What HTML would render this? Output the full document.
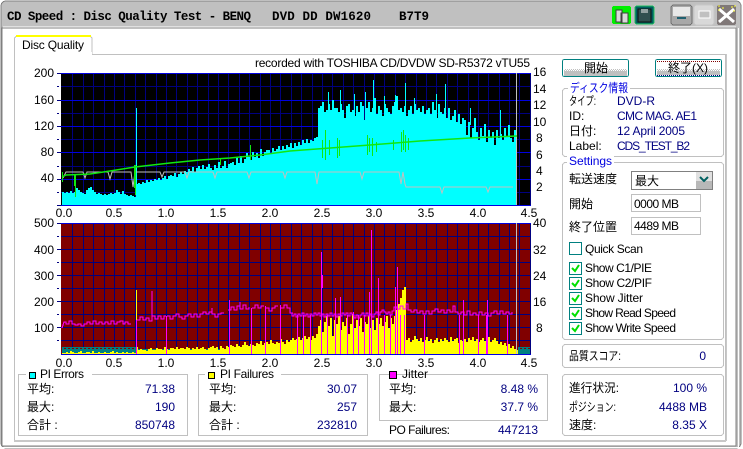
<!DOCTYPE html>
<html><head><meta charset="utf-8"><style>
html,body{margin:0;padding:0;background:#fff;overflow:hidden}
svg{display:block}
text{font-family:"Liberation Sans","Noto Sans CJK JP",sans-serif;font-size:12px;fill:#000}
.v{fill:#000080}.e{text-anchor:end}.m{text-anchor:middle}.b{fill:#0000e0}
.g{fill:none;stroke:#c0c0c0;stroke-width:1}
</style></head><body>
<svg width="743" height="449" viewBox="0 0 743 449" xmlns="http://www.w3.org/2000/svg" shape-rendering="crispEdges">
<defs>
<pattern id="dith" width="2" height="2" patternUnits="userSpaceOnUse"><rect width="2" height="2" fill="#fff"/><rect width="1" height="1" fill="#c0c0c0"/><rect x="1" y="1" width="1" height="1" fill="#c0c0c0"/></pattern>
<pattern id="tealdith" width="4" height="2" patternUnits="userSpaceOnUse"><rect width="4" height="2" fill="#008080"/><rect width="2" height="1" fill="#800000"/></pattern>
</defs>
<!-- frame -->
<rect width="743" height="449" fill="#fff"/>
<rect x="1" y="1" width="740" height="447" rx="5" fill="#c0c0c0" stroke="#808080"/>
<rect x="2" y="28" width="734" height="418" fill="#fff" stroke="#808080"/>
<path d="M3 27H736" stroke="#fff"/>
<rect x="738" y="28" width="1" height="420" fill="#fff"/>
<rect x="2" y="447" width="738" height="1" fill="#fff"/>
<!-- title -->
<text x="7" y="20" style="font-family:'Liberation Mono',monospace;font-weight:bold;font-size:12.5px" textLength="244">CD Speed : Disc Quality Test - BENQ</text>
<text x="272" y="20" style="font-family:'Liberation Mono',monospace;font-weight:bold;font-size:12.5px" textLength="99">DVD DD DW1620</text>
<text x="399" y="20" style="font-family:'Liberation Mono',monospace;font-weight:bold;font-size:12.5px" textLength="30">B7T9</text>
<!-- title icons -->
<rect x="612" y="6" width="19" height="18" rx="2" fill="#00f000"/>
<path d="M616 10h6v12h-6zM621 13h7v10h-7z" fill="#d8d8d8" stroke="#404040"/>
<rect x="635" y="6" width="19" height="18" rx="2" fill="#006060" stroke="#20c060"/>
<rect x="638" y="9" width="13" height="13" fill="#305050" stroke="#101010"/>
<rect x="641" y="9" width="7" height="4" fill="#90a0a0"/>
<rect x="671" y="5" width="21" height="20" rx="3" fill="#a8a8a8" stroke="#707070"/>
<rect x="673" y="7" width="17" height="9" fill="#e8e8e8"/>
<rect x="677" y="17" width="9" height="2" fill="#206070"/>
<rect x="694" y="5" width="20" height="20" rx="3" fill="#d8d8d8" stroke="#c8c8c8"/>
<rect x="699" y="11" width="11" height="7" fill="#c0c0c0" stroke="#fff"/>
<rect x="717" y="5" width="19" height="20" rx="2" fill="#807878"/>
<path d="M719 9l15 13M734 9l-15 13" stroke="#fff" stroke-width="3" shape-rendering="auto"/>
<path d="M718 6h2M722 8h2M731 7h2M734 6h2M718 10h2M733 11h2" stroke="#ffff40"/>
<!-- tab panel -->
<rect x="14.5" y="54.5" width="711" height="386" fill="#fff" class="g"/>
<path d="M14 440.500H726M14 441.500H726M726.500 54V441" stroke="#c8c8c8" fill="none"/>
<path d="M14.500 54V38l2-2H90l2 2V54" fill="#fff" stroke="#c0c0c0"/>
<rect x="16" y="35" width="75" height="2" fill="#ffff00"/>
<rect x="15" y="52" width="77" height="4" fill="#fff"/>
<text x="22" y="49" textLength="62">Disc Quality</text>
<text x="255" y="67" textLength="275">recorded with TOSHIBA CD/DVDW SD-R5372 vTU55</text>

<!-- TOP CHART -->
<rect x="61" y="73" width="470" height="132" fill="#000"/>
<path d="M72.500 73V205M83.500 73V205M93.500 73V205M104.500 73V205M114.500 73V205M124.500 73V205M135.500 73V205M145.500 73V205M156.500 73V205M166.500 73V205M176.500 73V205M187.500 73V205M197.500 73V205M208.500 73V205M218.500 73V205M228.500 73V205M239.500 73V205M249.500 73V205M260.500 73V205M270.500 73V205M280.500 73V205M291.500 73V205M301.500 73V205M312.500 73V205M322.500 73V205M332.500 73V205M343.500 73V205M353.500 73V205M364.500 73V205M374.500 73V205M384.500 73V205M395.500 73V205M405.500 73V205M416.500 73V205M426.500 73V205M436.500 73V205M447.500 73V205M457.500 73V205M468.500 73V205M478.500 73V205M488.500 73V205M499.500 73V205M509.500 73V205M519.500 73V205M530.500 73V205M61 86.500H531M61 113.500H531M61 139.500H531M61 166.500H531M61 192.500H531" stroke="#000080" fill="none"/>
<path d="M61 73.500H531M61 100.500H531M61 126.500H531M61 152.500H531M61 179.500H531M61 205.500H531" stroke="#0000e0" fill="none"/>
<path d="M57 73.500h4M57 86.500h2M57 100.500h4M57 113.500h2M57 126.500h4M57 139.500h2M57 152.500h4M57 166.500h2M57 179.500h4M57 192.500h2M57 205.500h4" stroke="#000080" fill="none"/>
<path fill="#00ffff" d="M62 205V192h2V193h2V192h2V193h2V191h2V193h2V192h2V188h2V190h2V192h2V193h2V194h2V190h2V188h2V187h2V190h2V192h2V194h2V193h2V194h2V195h2V194h2V195h2V194h2V193h2V194h2V193h2V190h2V192h2V194h2V191h2V194h2V195h2V196h2V195h2V196h2V197h2V205Z
M136 205V184h2V183h2V184h2V182h2V183h2V180h2V182h2V180h2V181h2V179h2V180h2V178h2V180h2V178h2V176h2V179h2V176h2V175h2V176h2V173h2V177h2V174h2V172h2V174h2V171h2V205Z
M186 205V172h2V169h2V171h2V167h2V172h2V168h2V166h2V169h2V165h2V169h2V167h2V164h2V168h2V170h2V165h2V168h2V162h2V168h2V166h2V161h2V168h2V164h2V205Z
M230 205V163h2V162h2V165h2V158h2V163h2V156h2V163h2V159h2V153h2V157h2V205Z
M250 205V160h2V152h2V157h2V153h2V158h2V149h2V156h2V152h2V150h2V150h2V154h2V148h2V151h2V205Z
M276 205V149h2V146h2V150h2V146h2V149h2V145h2V147h2V143h2V148h2V143h2V146h2V142h2V145h2V140h2V143h2V139h2V143h2V140h2V141h2V138h2V205Z
M316 205V137h2V108h2V106h2V102h2V112h2V110h2V104h2V110h2V100h2V108h2V108h2V112h2V104h2V110h2V118h2V106h2V104h2V112h2V110h2V116h2V106h2V112h2V102h2V106h2V120h2V108h2V102h2V112h2V108h2V98h2V114h2V106h2V110h2V116h2V104h2V108h2V112h2V114h2V106h2V102h2V96h2V110h2V108h2V112h2V106h2V116h2V110h2V106h2V114h2V104h2V110h2V108h2V112h2V106h2V114h2V110h2V205Z
M428 205V108h2V114h2V102h2V110h2V118h2V104h2V112h2V114h2V108h2V118h2V108h2V120h2V116h2V110h2V122h2V114h2V124h2V118h2V205Z
M464 205V120h2V135h2V122h2V138h2V128h2V118h2V132h2V140h2V128h2V136h2V124h2V142h2V130h2V138h2V205Z
M492 205V132h2V145h2V130h2V138h2V134h2V140h2V128h2V136h2V125h2V138h2V142h2V130h2V205Z"/>
<path d="M136.500 205V108M328.500 120V92M340.500 120V90M354.500 120V94M373.500 120V80M365.500 120V92M384.500 120V96M395.500 120V95M405.500 120V83M414.500 120V98M445.500 120V84M436.500 120V94M470.500 125V108M500.500 135V110" stroke="#00ffff" fill="none"/>
<rect x="516" y="73" width="1" height="132" fill="#c0c0c0"/>
<!-- grey write speed -->
<path fill="none" stroke="#c0c0c0" shape-rendering="auto" d="M63 178L66 172H83L85 178 87 172H108L110 179 112 172H131L133 187 135 172H160L162 177 164 172H185L187 178 189 172H213L215 178 217 172H247L249 178 251 172H283L285 178 287 172H315L317 184 319 172H360L362 179 364 172H399L401 184 403 172 405 184 406 187H440L442 193 444 187H486L488 192 490 187H513"/>
<!-- green read speed -->
<path fill="none" stroke="#10e810" stroke-width="1.500" shape-rendering="auto" d="M62 177L66 175 90 174 110 171 135 167 170 163 200 160 230 158 260 155 290 151 330 148 370 145 420 141 470 138 517 136"/>
<path fill="none" stroke="#10e810" d="M62.500 172V182M75.500 174V197M74.500 174V186M135.500 165V195M134.500 165V188M220.500 158V165M250.500 145V160M325.500 130V160M322.500 140V158M329.500 140V155M337.500 138V158M339.500 140V156M367.500 135V155M369.500 138V152M372.500 138V156M376.500 142V152M393.500 140V150M401.500 132V152M403.500 130V150M405.500 135V152M408.500 138V150"/>
<!-- axis text top -->
<text x="54" y="77" class="e">200</text><text x="54" y="104" class="e">160</text><text x="54" y="130" class="e">120</text><text x="54" y="156" class="e">80</text><text x="54" y="182" class="e">40</text>
<text x="533" y="76">16</text><text x="533" y="93">14</text><text x="533" y="109">12</text><text x="533" y="126">10</text><text x="536" y="142">8</text><text x="536" y="159">6</text><text x="536" y="175">4</text><text x="536" y="191">2</text>
<text x="64" y="217" class="m">0.0</text><text x="114" y="217" class="m">0.5</text><text x="166" y="217" class="m">1.0</text><text x="218" y="217" class="m">1.5</text><text x="270" y="217" class="m">2.0</text><text x="322" y="217" class="m">2.5</text><text x="374" y="217" class="m">3.0</text><text x="426" y="217" class="m">3.5</text><text x="478" y="217" class="m">4.0</text><text x="529" y="217" class="m">4.5</text>

<!-- BOTTOM CHART -->
<rect x="61" y="223" width="470" height="131" fill="#800000"/>
<path d="M72.500 223V354M83.500 223V354M93.500 223V354M104.500 223V354M114.500 223V354M124.500 223V354M135.500 223V354M145.500 223V354M156.500 223V354M166.500 223V354M176.500 223V354M187.500 223V354M197.500 223V354M208.500 223V354M218.500 223V354M228.500 223V354M239.500 223V354M249.500 223V354M260.500 223V354M270.500 223V354M280.500 223V354M291.500 223V354M301.500 223V354M312.500 223V354M322.500 223V354M332.500 223V354M343.500 223V354M353.500 223V354M364.500 223V354M374.500 223V354M384.500 223V354M395.500 223V354M405.500 223V354M416.500 223V354M426.500 223V354M436.500 223V354M447.500 223V354M457.500 223V354M468.500 223V354M478.500 223V354M488.500 223V354M499.500 223V354M509.500 223V354M519.500 223V354M530.500 223V354M61 236.500H531M61 249.500H531M61 262.500H531M61 275.500H531M61 288.500H531M61 301.500H531M61 314.500H531M61 327.500H531M61 340.500H531" stroke="#000080" fill="none"/>
<path d="M61 223.500H531M61 354.500H531" stroke="#0000e0" fill="none"/>
<path d="M57 223.500h4M57 236.500h2M57 249.500h4M57 262.500h2M57 275.500h4M57 288.500h2M57 301.500h4M57 314.500h2M57 327.500h4M57 340.500h2" stroke="#000080" fill="none"/>
<rect x="62" y="347" width="74" height="7" fill="#008080"/>
<rect x="62" y="347" width="74" height="2" fill="url(#tealdith)"/>
<rect x="136" y="349" width="100" height="5" fill="#008080"/>
<rect x="518" y="347" width="12" height="7" fill="#008080"/>
<rect x="518" y="347" width="12" height="2" fill="url(#tealdith)"/>
<path fill="#ffff00" d="M62 354V353h2V353h2V352h2V353h2V351h2V352h2V353h2V353h2V352h2V351h2V353h2V353h2V352h2V352h2V353h2V351h2V353h2V353h2V352h2V353h2V353h2V352h2V353h2V353h2V352h2V351h2V353h2V352h2V353h2V353h2V352h2V353h2V352h2V353h2V353h2V352h2V353h2V354Z
M136 354V290h1V347h1V350h2V349h2V350h2V350h2V351h2V349h2V348h2V350h2V350h2V348h2V349h2V349h2V350h2V347h2V349h2V350h2V348h2V348h2V349h2V347h2V349h2V348h2V348h2V349h2V347h2V348h2V350h2V348h2V349h2V347h2V349h2V348h2V347h2V349h2V350h2V348h2V347h2V346h2V348h2V347h2V350h2V346h2V348h2V349h2V346h2V347h2V345h2V354Z
M230 354V348h2V346h2V347h2V344h2V346h2V347h2V345h2V342h2V345h2V346h2V344h2V345h2V346h2V343h2V344h2V341h2V345h2V343h2V342h2V344h2V340h2V343h2V344h2V342h2V343h2V339h2V342h2V344h2V340h2V342h2V354Z
M290 354V340h2V338h2V340h2V339h2V337h2V340h2V338h2V336h2V339h2V337h2V340h2V336h2V338h2V334h2V354Z
M318 354V326h2V320h2V332h2V322h2V316h2V326h2V318h2V336h2V320h2V324h2V316h2V330h2V322h2V326h2V318h2V334h2V324h2V314h2V328h2V320h2V326h2V318h2V332h2V322h2V324h2V316h2V328h2V320h2V330h2V318h2V324h2V318h2V326h2V322h2V316h2V328h2V318h2V324h2V316h2V310h2V304h2V298h2V290h2V287h2V354Z
M406 354V340h2V338h2V342h2V340h2V336h2V339h2V341h2V338h2V342h2V340h2V337h2V341h2V339h2V343h2V340h2V338h2V342h2V339h2V341h2V338h2V340h2V342h2V337h2V341h2V339h2V338h2V343h2V340h2V341h2V339h2V342h2V338h2V340h2V337h2V341h2V339h2V342h2V340h2V338h2V341h2V339h2V337h2V342h2V340h2V338h2V341h2V344h2V342h2V345h2V343h2V346h2V344h2V348h2V346h2V349h2V350h2V354Z"/>
<!-- magenta jitter -->
<path fill="none" stroke="#ff00ff" stroke-width="1" d="M62 328L64 322h2v2h3v-3h3v3h3v1h3v-1h3v2h3v-2h3v-2h3v2h3v-3h3v3h3v-2h3v2h3v-2h3v2h3v-3h3v3h3v-2h3v-1h3v3h2v-2h3v2h3M136.500 322V354M136.500 354V320"/>
<path fill="none" stroke="#ff00ff" d="M137 320h3v-3h3v3h3v-2h3v3h3V291v25h3v3h3v-3h3v3h3v-3h2M166.500 316V354M167 316h3v3h3v-3h3v-2h3v3h3v2h3v-3h3v-2h3v3h3v-3h3v3h3v-3h3v-2h3v2h3v-2h3v-4v6h3v3h3v-3h3v-1h3M229.500 300V354M228 310h3v-3h3v3h3v-4h3v-4v7h3v-4h3v4h3v-2M251.500 308V354M252 308h3v-3h3v3h3v-2h3M265.500 306V354M266 308h3v3h3v-3h3v-2h3M280.500 305V354M281 308h3v-3h3v3h3v5h3"/>
<path fill="none" stroke="#ff00ff" d="M290 313h2v3h2v-2h2v3h2v-3h2v2h2v-3h2v3h2v-2h2v3h2v-3h2v2h2v-3h2v2h2v-2h2v3h2v-2h2v3h2v-3h2v2h2v-3h2v3h2v-2h2v3h2v-3h2v2h2v-3h2v2h2v-2h2v3h2v-3h2v2h2v3h2v-3h2v3h2v-3h2v-2h2v3h2v-3h2v3h2v-2h2v3h2v-3h2v-2h2v3h2v-3h2v-2h2v2h2v2h2v-2h2v3h2v-4h2v-4h3v2h3v-3h3v3h3v-5h2v6h3v2h3v-2h3v3h3v-2h3v3h3v-3h3v3h3v-3h3v-2h3v3h3v-2h3v3h3v-3h3v2h3v-6h2v6h3v2h3v-2h3v3h3v-4h3v4h3v-2h3v2h3v-3h3v3h3v-2h3v3h3v-3h3v-2h3v3h3v-3h3v3h3v-2h3v2h3v-2"/>
<path fill="none" stroke="#ff00ff" d="M297.500 315V354M303.500 315V354M310.500 315V354M321.500 252V354M322.500 275V288M327.500 315V354M335.500 298V354M340.500 297V354M347.500 315V354M353.500 312V354M358.500 315V354M364.500 315V354M369.500 292V354M371.500 230V354M378.500 278V354M384.500 315V354M390.500 315V354M395.500 287V354M397.500 267V354M400.500 315V354M404.500 315V354M424.500 315V354M459.500 315V354M463.500 300V354M478.500 315V354M486.500 315V354M487.500 300V354M507.500 315V354"/>
<rect x="516" y="223" width="1" height="131" fill="#c0c0c0"/>
<!-- axis text bottom -->
<text x="54" y="227" class="e">500</text><text x="54" y="254" class="e">400</text><text x="54" y="280" class="e">300</text><text x="54" y="306" class="e">200</text><text x="54" y="332" class="e">100</text>
<text x="533" y="227">40</text><text x="533" y="254">32</text><text x="533" y="280">24</text><text x="533" y="306">16</text><text x="536" y="332">8</text>
<text x="64" y="367" class="m">0.0</text><text x="114" y="367" class="m">0.5</text><text x="166" y="367" class="m">1.0</text><text x="218" y="367" class="m">1.5</text><text x="270" y="367" class="m">2.0</text><text x="322" y="367" class="m">2.5</text><text x="374" y="367" class="m">3.0</text><text x="426" y="367" class="m">3.5</text><text x="478" y="367" class="m">4.0</text><text x="529" y="367" class="m">4.5</text>

<!-- bottom stats -->
<rect x="18.500" y="374.500" width="169" height="61" class="g"/>
<rect x="26" y="370" width="66" height="10" fill="#fff"/>
<rect x="29.500" y="372.500" width="6" height="6" fill="#00ffff" stroke="#000"/>
<text x="40" y="378" textLength="44">PI Errors</text>
<text x="27" y="393">平均:</text><text x="27" y="411">最大:</text><text x="27" y="429">合計 :</text>
<text x="175" y="393" class="v e">71.38</text><text x="175" y="411" class="v e">190</text><text x="175" y="429" class="v e">850748</text>

<rect x="198.500" y="374.500" width="169" height="61" class="g"/>
<rect x="205" y="370" width="76" height="10" fill="#fff"/>
<rect x="208.500" y="372.500" width="6" height="6" fill="#ffff00" stroke="#000"/>
<text x="220" y="378" textLength="54">PI Failures</text>
<text x="209" y="393">平均:</text><text x="209" y="411">最大:</text><text x="209" y="429">合計 :</text>
<text x="357" y="393" class="v e">30.07</text><text x="357" y="411" class="v e">257</text><text x="357" y="429" class="v e">232810</text>

<rect x="379.500" y="374.500" width="168" height="46" class="g"/>
<rect x="389.500" y="371.500" width="7" height="7" fill="#ff00ff" stroke="#000"/>
<text x="402" y="378" textLength="26">Jitter</text>
<text x="389" y="393">平均:</text><text x="389" y="411">最大:</text>
<text x="538" y="393" class="v e">8.48 %</text><text x="538" y="411" class="v e">37.7 %</text>
<text x="389" y="434" textLength="61">PO Failures:</text><text x="538" y="434" class="v e">447213</text>

<!-- buttons -->
<rect x="562.500" y="59.500" width="66" height="17" rx="2" fill="#fff" stroke="#008080"/>
<rect x="564" y="71" width="63" height="5" fill="#c0c0c0"/>
<rect x="564" y="69" width="63" height="2" fill="url(#dith)"/>
<text x="584" y="72" textLength="24">開始</text>
<rect x="655.500" y="59.500" width="66" height="17" rx="2" fill="#fff" stroke="#008080"/>
<rect x="657" y="71" width="63" height="4" fill="#c0c0c0"/>
<rect x="657" y="69" width="63" height="2" fill="url(#dith)"/>
<path d="M657 61.500H720" stroke="#800000" stroke-dasharray="1 1"/>
<path d="M657 75.500H720" stroke="#000080" stroke-dasharray="1 1"/>
<text x="668" y="72" textLength="40">終了(X)</text>

<!-- disc info -->
<rect x="562.500" y="88.500" width="161" height="68" rx="3" class="g"/>
<rect x="568" y="82" width="62" height="12" fill="#fff"/>
<text x="570" y="92" class="b" textLength="58" lengthAdjust="spacingAndGlyphs">ディスク情報</text>
<text x="569" y="105" textLength="27" lengthAdjust="spacingAndGlyphs">タイプ:</text><text x="617" y="105" class="v">DVD-R</text>
<text x="569" y="120">ID:</text><text x="617" y="120" class="v" textLength="80">CMC MAG. AE1</text>
<text x="569" y="135">日付:</text><text x="617" y="135" class="v" textLength="68">12 April 2005</text>
<text x="569" y="150">Label:</text><text x="617" y="150" class="v" textLength="73">CDS_TEST_B2</text>

<!-- settings -->
<rect x="562.500" y="162.500" width="161" height="177" rx="3" class="g"/>
<rect x="567" y="156" width="47" height="12" fill="#fff"/>
<text x="569" y="165" class="b" textLength="43">Settings</text>
<text x="569" y="183" textLength="48">転送速度</text>
<rect x="631.500" y="171.500" width="81" height="18" fill="#fff" stroke="#808080"/>
<text x="635" y="185">最大</text>
<rect x="696" y="172" width="16" height="17" fill="#e0e0e0"/>
<rect x="696" y="181" width="16" height="8" fill="#b8b8b8"/>
<path d="M700 177l4 4 4-4" stroke="#006060" stroke-width="2" fill="none" shape-rendering="auto"/>
<text x="569" y="208">開始</text>
<rect x="631.500" y="194.500" width="69" height="17" fill="#fff" stroke="#c0c0c0"/>
<text x="634" y="208" textLength="45">0000 MB</text>
<text x="569" y="231" textLength="48">終了位置</text>
<rect x="631.500" y="217.500" width="69" height="17" fill="#fff" stroke="#c0c0c0"/>
<text x="634" y="230" textLength="45">4489 MB</text>
<rect x="569.500" y="242.500" width="12" height="12" fill="#fff" stroke="#008080"/>
<text x="585" y="253" textLength="58">Quick Scan</text>
<g fill="#fff" stroke="#008080">
<rect x="569.500" y="262.500" width="12" height="12"/><rect x="569.500" y="277.500" width="12" height="12"/><rect x="569.500" y="292.500" width="12" height="12"/><rect x="569.500" y="307.500" width="12" height="12"/><rect x="569.500" y="322.500" width="12" height="12"/>
</g>
<g fill="none" stroke="#00e000" stroke-width="2" shape-rendering="auto">
<path d="M572 268l3 3 4-6"/><path d="M572 283l3 3 4-6"/><path d="M572 298l3 3 4-6"/><path d="M572 313l3 3 4-6"/><path d="M572 328l3 3 4-6"/>
</g>
<text x="585" y="272" textLength="67">Show C1/PIE</text>
<text x="585" y="287" textLength="67">Show C2/PIF</text>
<text x="585" y="302" textLength="58">Show Jitter</text>
<text x="585" y="317" textLength="91">Show Read Speed</text>
<text x="585" y="332" textLength="91">Show Write Speed</text>

<!-- score -->
<rect x="562.500" y="344.500" width="161" height="23" rx="3" class="g"/>
<text x="569" y="360" textLength="52" lengthAdjust="spacingAndGlyphs">品質スコア:</text><text x="706" y="360" class="v e">0</text>

<!-- progress -->
<rect x="562.500" y="374.500" width="161" height="61" rx="3" class="g"/>
<text x="569" y="392" textLength="50" lengthAdjust="spacingAndGlyphs">進行状況:</text><text x="707" y="392" class="v e">100 %</text>
<text x="569" y="411" textLength="47" lengthAdjust="spacingAndGlyphs">ポジション:</text><text x="707" y="411" class="v e">4488 MB</text>
<text x="569" y="429">速度:</text><text x="707" y="429" class="v e">8.35 X</text>
</svg>
</body></html>
